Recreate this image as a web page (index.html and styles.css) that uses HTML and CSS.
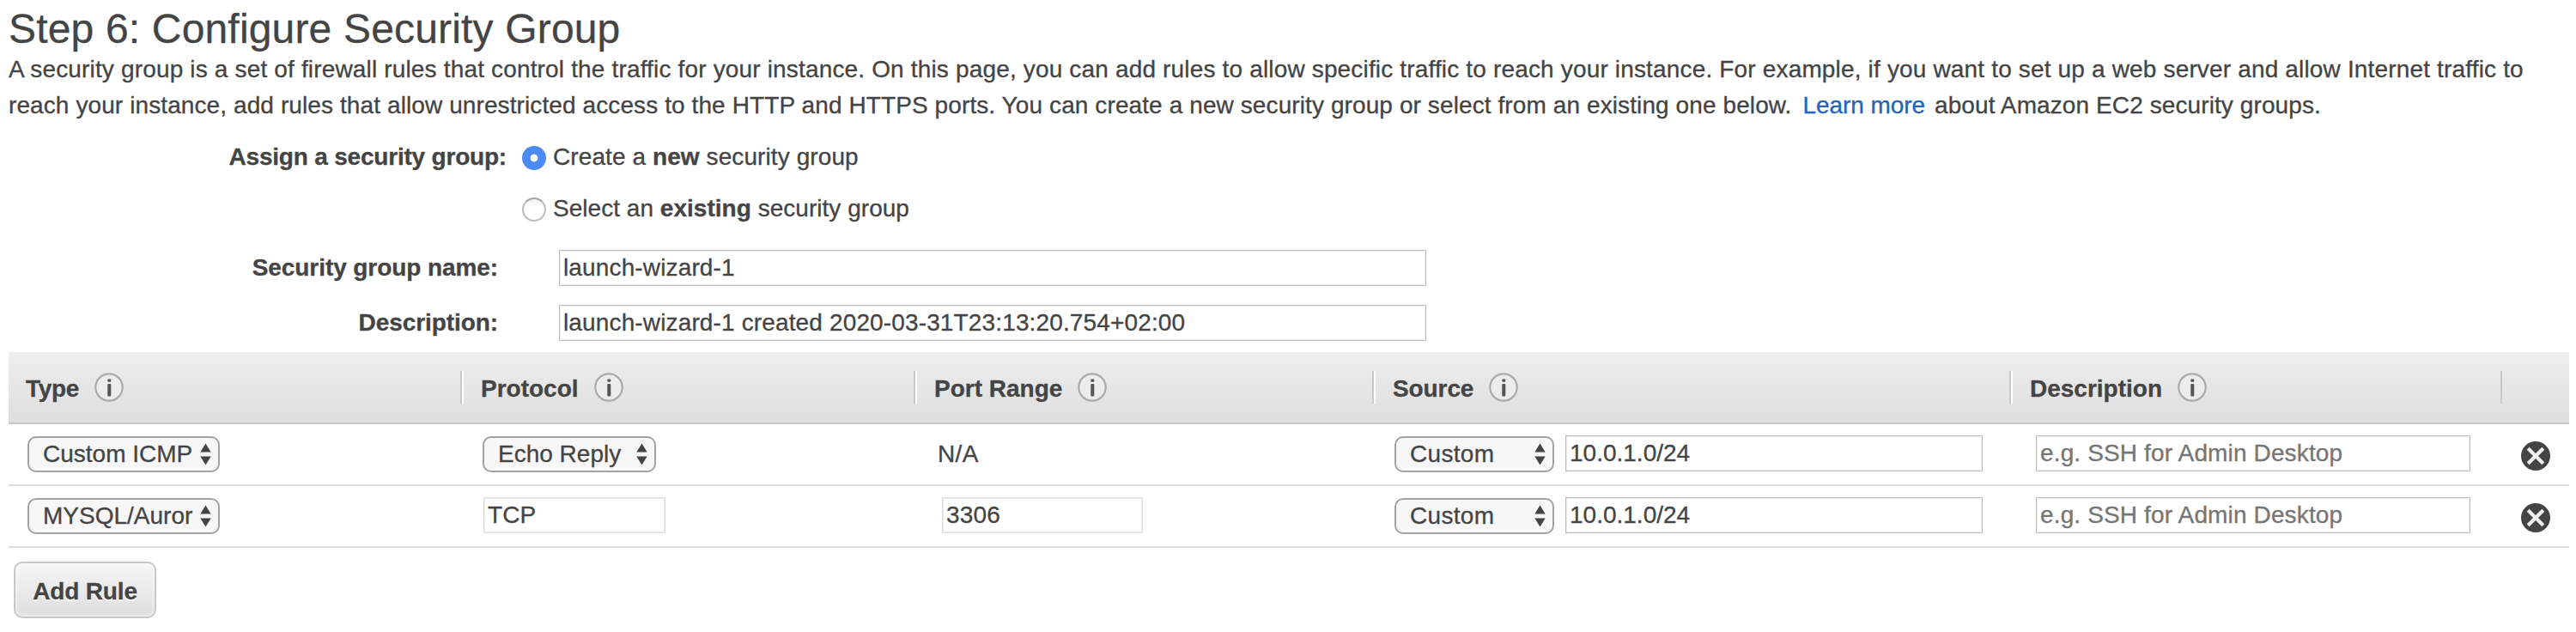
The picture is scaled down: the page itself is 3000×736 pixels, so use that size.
FILE: index.html
```html
<!DOCTYPE html>
<html lang="en">
<head>
<meta charset="utf-8">
<title>Step 6: Configure Security Group</title>
<link rel="stylesheet" href="styles.css">
</head>
<body>
<svg class="defs" aria-hidden="true">
  <symbol id="info" viewBox="0 0 34 34"><circle cx="17" cy="17" r="15.7" fill="#ececec" stroke="#ababab" stroke-width="2.2"/><rect x="15.3" y="7.6" width="4" height="3.2" rx="1" fill="#555"/><rect x="15.3" y="13" width="4" height="14.6" rx="1" fill="#555"/></symbol>
  <symbol id="arrows" viewBox="0 0 13 26"><path d="M6.5 0.5 12.7 10.5H.3Z M6.5 25.5 12.7 15.5H.3Z" fill="#444"/></symbol>
  <symbol id="remove" viewBox="0 0 34 34"><circle cx="17" cy="17" r="17" fill="#444"/><path d="M9.7 9.7 24.3 24.3M24.3 9.7 9.7 24.3" stroke="#f0f0f0" stroke-width="4.2" fill="none" stroke-linecap="square"/></symbol>
</svg>
<main class="page">
  <h1 class="title">Step 6: Configure Security Group</h1>
  <p class="intro"><span class="line-1">A security group is a set of firewall rules that control the traffic for your instance. On this page, you can add rules to allow specific traffic to reach your instance. For example, if you want to set up a web server and allow Internet traffic to</span><br><span class="line-2">reach your instance, add rules that allow unrestricted access to the HTTP and HTTPS ports. You can create a new security group or select from an existing one below. <a class="link" href="#">Learn more</a> about Amazon EC2 security groups.</span></p>

  <form class="form">
    <div class="choice-row">
      <span class="label label-assign">Assign a security group:</span>
      <span class="radio radio-on"></span><label class="choice">Create a <b>new</b> security group</label>
    </div>
    <div class="choice-row">
      <span class="label label-assign"></span>
      <span class="radio"></span><label class="choice choice-existing">Select an <b>existing</b> security group</label>
    </div>
    <div class="fields">
      <div class="field-row">
        <span class="label">Security group name:</span>
        <input class="input input-wide" value="launch-wizard-1">
      </div>
      <div class="field-row">
        <span class="label">Description:</span>
        <input class="input input-wide" value="launch-wizard-1 created 2020-03-31T23:13:20.754+02:00">
      </div>
    </div>
  </form>

  <section class="rules">
    <div class="row head">
      <div class="th th-type"><span class="name">Type</span><svg class="info"><use href="#info"/></svg></div>
      <div class="th"><span class="name">Protocol</span><svg class="info"><use href="#info"/></svg></div>
      <div class="th"><span class="name">Port Range</span><svg class="info"><use href="#info"/></svg></div>
      <div class="th"><span class="name name-source">Source</span><svg class="info"><use href="#info"/></svg></div>
      <div class="th"><span class="name">Description</span><svg class="info"><use href="#info"/></svg></div>
      <div class="th th-last"></div>
    </div>
    <div class="row">
      <div class="td td-type"><span class="select select-type"><span class="value">Custom ICMP</span><svg class="arrows"><use href="#arrows"/></svg></span></div>
      <div class="td td-protocol"><span class="select select-protocol"><span class="value">Echo Reply</span><svg class="arrows"><use href="#arrows"/></svg></span></div>
      <div class="td td-port"><span class="na">N/A</span></div>
      <div class="td td-source"><span class="select select-source"><span class="value">Custom</span><svg class="arrows"><use href="#arrows"/></svg></span><input class="input input-source" value="10.0.1.0/24"></div>
      <div class="td td-desc"><input class="input input-desc" placeholder="e.g. SSH for Admin Desktop"></div>
      <div class="td td-remove"><svg class="remove"><use href="#remove"/></svg></div>
    </div>
    <div class="row">
      <div class="td td-type"><span class="select select-type"><span class="value">MYSQL/Auror</span><svg class="arrows"><use href="#arrows"/></svg></span></div>
      <div class="td td-protocol"><input class="input input-off input-protocol" value="TCP"></div>
      <div class="td td-port"><input class="input input-off input-port" value="3306"></div>
      <div class="td td-source"><span class="select select-source"><span class="value">Custom</span><svg class="arrows"><use href="#arrows"/></svg></span><input class="input input-source" value="10.0.1.0/24"></div>
      <div class="td td-desc"><input class="input input-desc" placeholder="e.g. SSH for Admin Desktop"></div>
      <div class="td td-remove"><svg class="remove"><use href="#remove"/></svg></div>
    </div>
  </section>
  <button class="add" type="button">Add Rule</button>
</main>
</body>
</html>
```
FILE: styles.css
```css
* { box-sizing: border-box; }
body { margin: 0; background: #fff; color: #444; font-family: "Liberation Sans", Arial, sans-serif; font-size: 28px; -webkit-text-stroke: 0.3px; }
.defs { display: block; width: 0; height: 0; }
.page { width: 2992px; height: 736px; padding-left: 10px; overflow: hidden; }
.title { margin: 0; font-size: 48px; font-weight: 400; line-height: 60px; height: 60px; white-space: nowrap; padding-top: 4px; letter-spacing: 0.17px; }
.intro { margin: 0; line-height: 42px; height: 94px; white-space: nowrap; }
.line-1 { letter-spacing: 0.163px; }
.line-2 { letter-spacing: 0.1px; }
.link { color: #2264bd; text-decoration: none; margin: 0 3px 0 5px; letter-spacing: -0.05px; }
.form { height: 256px; }
.choice-row { display: flex; align-items: center; height: 60px; white-space: nowrap; }
.label { width: 570px; text-align: right; font-weight: 700; white-space: nowrap; letter-spacing: -0.08px; }
.label-assign { width: 580px; letter-spacing: -0.2px; padding-bottom: 2px; }
.radio { width: 28px; height: 28px; margin: 0 8px 0 18px; border: 2px solid #bdbdbd; border-top-color: #a3a3a3; border-radius: 50%; background: linear-gradient(#f1f1f1, #fff 35%); }
.radio-on { border: 0; background: radial-gradient(circle, #fff 0 4px, #4b89f5 4.8px); }
.choice { letter-spacing: 0.09px; padding-bottom: 2px; }
.choice-existing { letter-spacing: 0.03px; }
.fields { padding-top: 6px; }
.field-row { display: flex; align-items: center; height: 64px; }
.field-row .input { margin-left: 71px; }
.input { appearance: none; height: 42px; margin: 0; padding: 0 4px; border: 1px solid #bbb; border-radius: 0; background: #fff; box-shadow: inset 0 0 0 1px #eee; color: #444; font: inherit; letter-spacing: 0.14px; outline: 0; }
.input::placeholder { color: #757575; opacity: 1; }
.input-wide { width: 1010px; }
.input-off { border-color: #ddd; }
.row { display: grid; grid-template-columns: 526px 528px 534px 742px 572px 80px; height: 72px; border-bottom: 2px solid #ddd; }
.head { height: 84px; background: linear-gradient(#eee, #dedede); border-bottom-color: #c8c8c8; padding-top: 22px; }
.th { display: flex; align-items: center; height: 38px; font-weight: 700; padding-left: 22px; border-left: 2px solid #c8c8c8; box-shadow: inset 2px 0 #fff; white-space: nowrap; }
.th-type { border: 0; box-shadow: none; padding-left: 20px; letter-spacing: -0.3px; }
.th-last { box-shadow: none; }
.name { padding-top: 3px; }
.name-source { letter-spacing: -0.1px; }
.info { width: 34px; height: 34px; margin-left: 18px; }
.td { display: flex; align-items: flex-start; padding-top: 13px; }
.td-type { padding-left: 22px; }
.td-protocol { padding-left: 27px; }
.td-port { padding-left: 33px; }
.td-source { padding-left: 26px; }
.td-desc { padding-left: 31px; }
.td-remove { padding: 20px 0 0 24px; }
.select { display: flex; align-items: center; height: 42px; margin-top: 1px; padding: 0 8px 0 16px; border: 2px solid #a3a3a3; border-radius: 10px; background: #f7f7f7; }
.select-type { width: 224px; }
.select-protocol { width: 202px; margin-left: -1px; }
.select-source { width: 186px; letter-spacing: 0.3px; }
.value { flex: 1; white-space: nowrap; }
.arrows { width: 13px; height: 26px; flex: none; }
.input-protocol { width: 212px; }
.input-port { width: 234px; }
.input-source { width: 486px; margin-left: 13px; letter-spacing: 0; }
.input-desc { width: 506px; }
.na { line-height: 42px; margin: 1px 0 0 -5px; letter-spacing: 0.4px; }
.remove { width: 34px; height: 34px; }
.add { display: block; width: 166px; height: 66px; margin: 16px 0 0 6px; padding: 3px 0 0; border: 2px solid #c8c8c8; border-radius: 10px; background: linear-gradient(#f6f6f6, #dedede); box-shadow: inset 0 0 4px #fff; color: #444; font: 700 28px "Liberation Sans", Arial, sans-serif; letter-spacing: -0.15px; text-shadow: 0 2px #fff; white-space: nowrap; }
```
